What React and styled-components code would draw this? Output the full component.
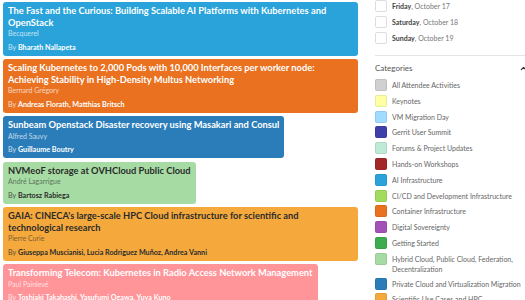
import React from "react";
import styled, { createGlobalStyle } from "styled-components";
import { ChevronUp } from "lucide-react";

const GlobalStyle = createGlobalStyle`
  body {
    margin: 0;
    background: #fff;
    font-family: "Lato", "Open Sans", sans-serif;
    overflow: hidden;
  }
`;

const Page = styled.div`
  display: flex;
  width: 525px;
  height: 300px;
  overflow: hidden;
`;

const Sessions = styled.div`
  display: flex;
  flex-direction: column;
  align-items: flex-start;
  gap: 3.5px;
  width: 355px;
  flex-shrink: 0;
  padding: 2px 0 0 3px;
`;

const Card = styled.div`
  width: fit-content;
  max-width: 355px;
  box-sizing: border-box;
  padding: 3px 5px 3px 5px;
  border-radius: 3px;
  background: ${p => p.bg};
  color: ${p => (p.dark ? "#2b2b2b" : "#fff")};
`;

const Title = styled.div`
  font-size: 9.3px;
  font-weight: 700;
  line-height: 11.5px;
`;

const Venue = styled.div`
  font-size: 7px;
  line-height: 10px;
  opacity: ${p => (p.dark ? 0.6 : 0.7)};
`;

const Speakers = styled.div`
  margin-top: 4.5px;
  font-size: 7.2px;
  line-height: 10px;
  span {
    opacity: 0.75;
  }
  b {
    font-weight: 700;
  }
`;

const Sidebar = styled.div`
  margin-left: 17px;
  width: 160px;
  flex-shrink: 0;
  color: #666;
`;

const DayList = styled.div`
  display: flex;
  flex-direction: column;
  gap: 4px;
  padding: 0 0 11px 0;
`;

const Row = styled.div`
  display: flex;
  align-items: flex-start;
  gap: 5px;
  font-size: 7px;
  line-height: 10px;
`;

const Box = styled.div`
  width: 12px;
  height: 12px;
  flex-shrink: 0;
  box-sizing: border-box;
  border-radius: 2px;
  background: ${p => p.color || "#fff"};
  border: 1px solid ${p => (p.color ? "rgba(0,0,0,0.08)" : "#ddd")};
`;

const DayLabel = styled.div`
  padding-top: 1px;
  color: #777;
  b {
    color: #444;
    font-weight: 700;
  }
`;

const Divider = styled.div`
  height: 1px;
  background: #e4e4e4;
  width: 155px;
`;

const SectionHead = styled.div`
  display: flex;
  justify-content: space-between;
  align-items: center;
  width: 153px;
  height: 10px;
  padding: 7px 0 6px;
  font-size: 8px;
  line-height: 10px;
  color: #555;
`;

const CatList = styled.div`
  display: flex;
  flex-direction: column;
  gap: 3.8px;
`;

const CatLabel = styled.div`
  padding-top: 1px;
  max-width: 136px;
  color: #666;
`;

const sessions = [
  {
    bg: "#29a3da",
    title: "The Fast and the Curious: Building Scalable AI Platforms with Kubernetes and OpenStack",
    venue: "Becquerel",
    speakers: "Bharath Nallapeta"
  },
  {
    bg: "#e9711f",
    title: "Scaling Kubernetes to 2,000 Pods with 10,000 Interfaces per worker node: Achieving Stability in High-Density Multus Networking",
    venue: "Bernard Grégory",
    speakers: "Andreas Florath, Matthias Britsch"
  },
  {
    bg: "#2a7db8",
    title: "Sunbeam Openstack Disaster recovery using Masakari and Consul",
    venue: "Alfred Sauvy",
    speakers: "Guillaume Boutry"
  },
  {
    bg: "#a6dca4",
    dark: true,
    title: "NVMeoF storage at OVHCloud Public Cloud",
    venue: "André Lagarrigue",
    speakers: "Bartosz Rabiega"
  },
  {
    bg: "#f5a93d",
    dark: true,
    title: "GAIA: CINECA's large-scale HPC Cloud infrastructure for scientific and technological research",
    venue: "Pierre Curie",
    speakers: "Giuseppa Muscianisi, Lucia Rodriguez Muñoz, Andrea Vanni"
  },
  {
    bg: "#ff9499",
    title: "Transforming Telecom: Kubernetes in Radio Access Network Management",
    venue: "Paul Painlevé",
    speakers: "Toshiaki Takahashi, Yasufumi Ogawa, Yuya Kuno"
  }
];

const days = [
  ["Friday", "October 17"],
  ["Saturday", "October 18"],
  ["Sunday", "October 19"]
];

const categories = [
  ["All Attendee Activities", "#d0d0d0"],
  ["Keynotes", "#ffffa6"],
  ["VM Migration Day", "#9fdcff"],
  ["Gerrit User Summit", "#3f3fa9"],
  ["Forums & Project Updates", "#bfead6"],
  ["Hands-on Workshops", "#a3282a"],
  ["AI Infrastructure", "#29a3da"],
  ["CI/CD and Development Infrastructure", "#a2dc5c"],
  ["Container Infrastructure", "#e9711f"],
  ["Digital Sovereignty", "#a351b7"],
  ["Getting Started", "#3dab4f"],
  ["Hybrid Cloud, Public Cloud, Federation, Decentralization", "#a6dca4"],
  ["Private Cloud and Virtualization Migration", "#2a7db8"],
  ["Scientific Use Cases and HPC", "#f5a93d"]
];

export default function App() {
  return (
    <Page>
      <GlobalStyle />
      <Sessions>
        {sessions.map(s => (
          <Card key={s.title} bg={s.bg} dark={s.dark}>
            <Title>{s.title}</Title>
            <Venue dark={s.dark}>{s.venue}</Venue>
            <Speakers>
              <span>By </span>
              <b>{s.speakers}</b>
            </Speakers>
          </Card>
        ))}
      </Sessions>
      <Sidebar>
        <DayList>
          {days.map(([d, date]) => (
            <Row key={d}>
              <Box />
              <DayLabel>
                <b>{d}</b>, {date}
              </DayLabel>
            </Row>
          ))}
        </DayList>
        <Divider />
        <SectionHead>
          Categories
          <ChevronUp size={9} strokeWidth={3} color="#333" />
        </SectionHead>
        <CatList>
          {categories.map(([name, color]) => (
            <Row key={name}>
              <Box color={color} />
              <CatLabel>{name}</CatLabel>
            </Row>
          ))}
        </CatList>
      </Sidebar>
    </Page>
  );
}
